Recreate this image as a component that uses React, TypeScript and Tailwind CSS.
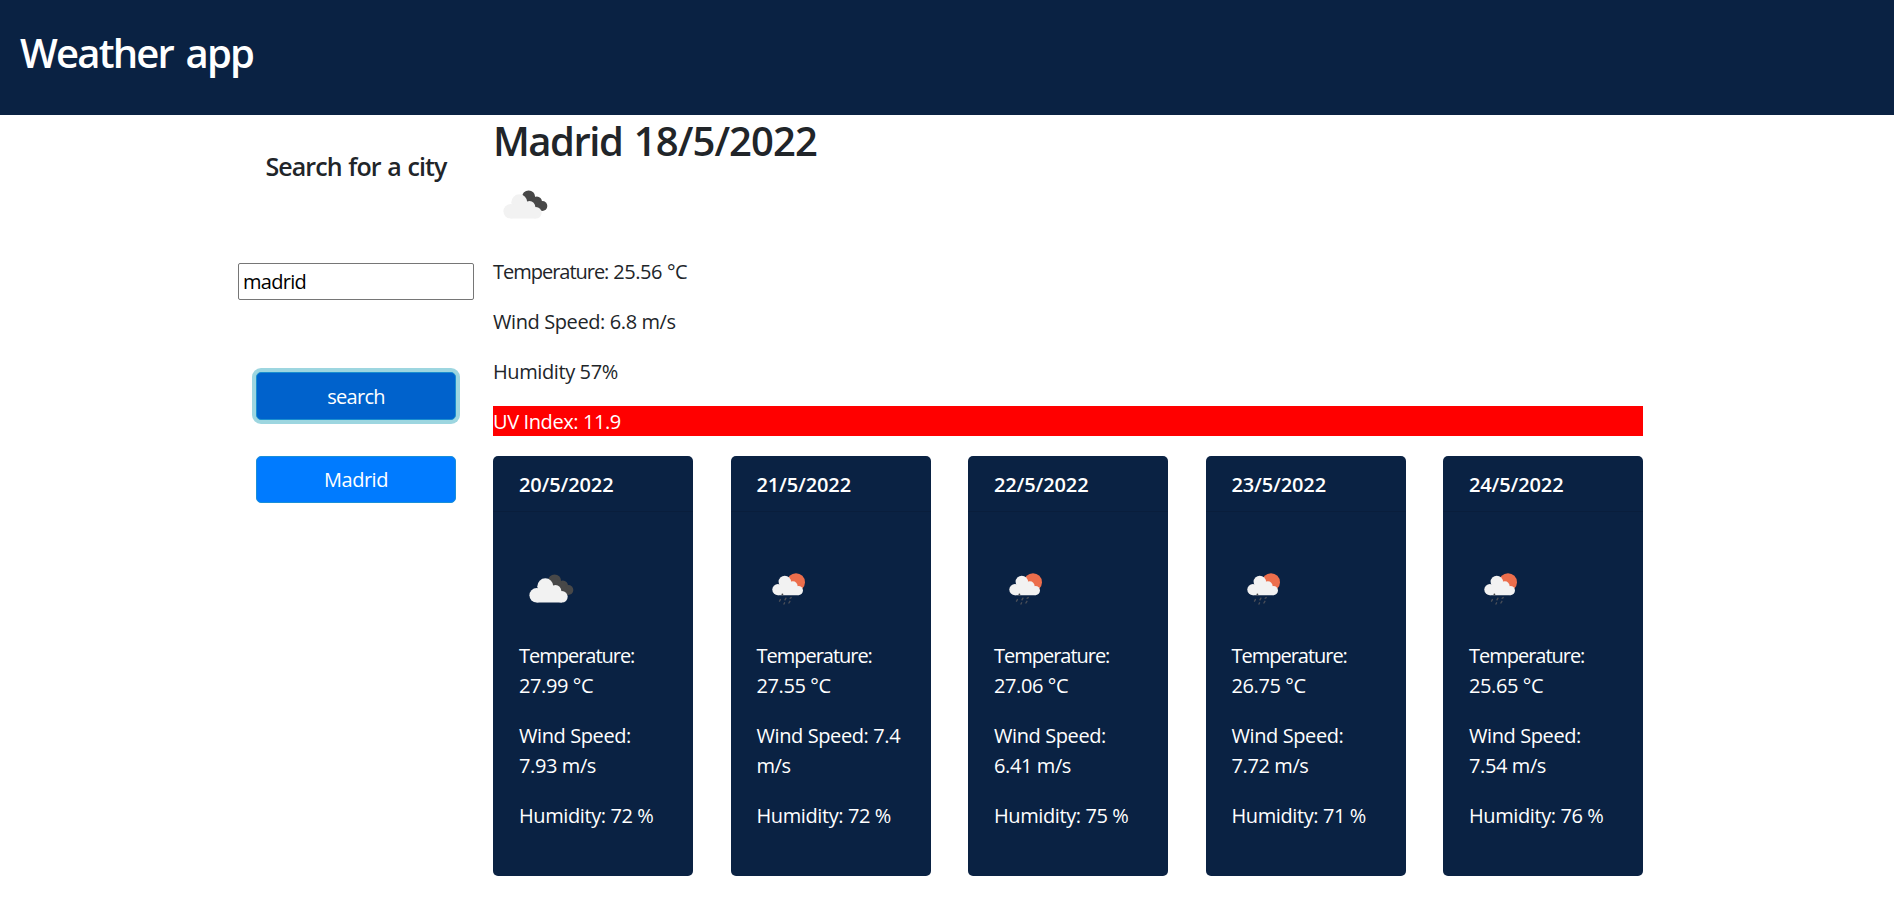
type Kind = 'clouds' | 'rain';

const days: { date: string; kind: Kind; temp: string; wind: string; humidity: string }[] = [
  { date: '20/5/2022', kind: 'clouds', temp: '27.99', wind: '7.93', humidity: '72' },
  { date: '21/5/2022', kind: 'rain', temp: '27.55', wind: '7.4', humidity: '72' },
  { date: '22/5/2022', kind: 'rain', temp: '27.06', wind: '6.41', humidity: '75' },
  { date: '23/5/2022', kind: 'rain', temp: '26.75', wind: '7.72', humidity: '71' },
  { date: '24/5/2022', kind: 'rain', temp: '25.65', wind: '7.54', humidity: '76' },
];

function WeatherIcon({ kind }: { kind: Kind }) {
  if (kind === 'clouds') {
    return (
      <svg className="block size-[62px]" viewBox="0 0 62 62" aria-hidden="true">
        <g fill="#484848">
          <circle cx="35.6" cy="24" r="6.6" />
          <circle cx="43.8" cy="28.6" r="5.2" />
          <circle cx="49.4" cy="33" r="4.9" />
          <path d="M38 22l8 5 4 10-8-2z" />
        </g>
        <g fill="#f2f2f2">
          <circle cx="26.3" cy="29.3" r="8" />
          <circle cx="17.7" cy="38.3" r="7.3" />
          <circle cx="36.5" cy="33.8" r="5.8" />
          <circle cx="42.9" cy="39.8" r="5.8" />
          <path d="M17.7 32h20l5.2 3v10.6H17.7z" />
        </g>
      </svg>
    );
  }
  return (
    <svg className="block size-[62px]" viewBox="0 0 62 62" aria-hidden="true">
      <circle cx="39" cy="25.2" r="9" fill="#ec6e4c" />
      <g fill="#f2f2f2">
        <circle cx="27.8" cy="25" r="6.2" />
        <circle cx="20.9" cy="32.6" r="5.6" />
        <circle cx="35.9" cy="29" r="4.7" />
        <circle cx="41.4" cy="33.6" r="4.6" />
        <path d="M20.9 28h15l5.5 2v8.2H20.9z" />
      </g>
      <circle cx="25.4" cy="37.4" r="0.9" fill="#484848" />
      <path
        stroke="#4a4e58"
        strokeWidth="1.4"
        strokeLinecap="round"
        d="M23.4 42.6l-.9 1.6M28.9 41.2l-.9 1.6M27.6 45.8l-.6 1.2M34.2 40.6l-1 .7M32.9 44.3l-1 1.7"
      />
    </svg>
  );
}

function Temperature({ value }: { value: string }) {
  return (
    <>
      <span className="tracking-[-1.02px]">Temperature:</span> {value} °C
    </>
  );
}

export default function App() {
  return (
    <div className="min-h-[914px] bg-white font-['Open_Sans','Noto_Sans',sans-serif] text-[20px] leading-[30px] tracking-[-0.4px] text-[#212529]">
      <header className="h-[115px] bg-[#0a2243] px-5 pt-[29px]">
        <h1 className="text-[40px] leading-[48px] font-semibold tracking-[-1.8px] text-white [word-spacing:4px]">
          Weather app
        </h1>
      </header>
      <div className="flex pl-[238px]">
        <aside className="flex w-[236px] flex-col items-center">
          <h2 className="mt-[36px] text-[25px] leading-[30px] font-semibold tracking-[-0.9px] [word-spacing:1px]">
            Search for a city
          </h2>
          <input
            className="mt-[82px] h-[37px] w-[236px] rounded-[2px] border border-[#767676] bg-white px-1 tracking-[-0.7px] text-black outline-none"
            defaultValue="madrid"
          />
          <button className="mt-[72px] h-12 w-[200px] rounded-[5px] border border-[#1a8fd0] bg-[#0062cc] pt-0.5 tracking-[-0.7px] text-white shadow-[0_0_0_4px_#9dd6e0]">
            search
          </button>
          <button className="mt-9 h-[47px] w-[200px] rounded-[5px] border border-[#1a8fd8] bg-[#007bff] tracking-[-0.5px] text-white">
            Madrid
          </button>
        </aside>
        <main className="ml-[19px] w-[1150px]">
          <h2 className="mt-[2px] text-[40px] leading-[48px] font-semibold tracking-[-0.9px] [word-spacing:2px]">
            <span className="tracking-[-1.5px]">Madrid</span> 18/5/2022
          </h2>
          <div className="mt-2 h-[84px]">
            <WeatherIcon kind="clouds" />
          </div>
          <p className="mb-5">
            <Temperature value="25.56" />
          </p>
          <p className="mb-5">Wind Speed: 6.8 m/s</p>
          <p className="mb-[19px]">Humidity 57%</p>
          <p className="mb-5 h-[30px] bg-[#ff0000] pt-px text-white">UV Index: 11.9</p>
          <section className="flex justify-between">
            {days.map((d) => (
              <article key={d.date} className="h-[420px] w-[200px] rounded-[5px] bg-[#0a2243] text-white">
                <h3 className="h-14 border-b border-[#091e3c] px-[26px] pt-[14px] font-semibold tracking-[-0.13px]">
                  {d.date}
                </h3>
                <div className="px-[26px] pt-[45px]">
                  <WeatherIcon kind={d.kind} />
                  <p className="mt-[22px] mb-5">
                    <Temperature value={d.temp} />
                  </p>
                  <p className="mb-5">Wind Speed: {d.wind} m/s</p>
                  <p className="whitespace-nowrap">Humidity: {d.humidity} %</p>
                </div>
              </article>
            ))}
          </section>
        </main>
      </div>
    </div>
  );
}
